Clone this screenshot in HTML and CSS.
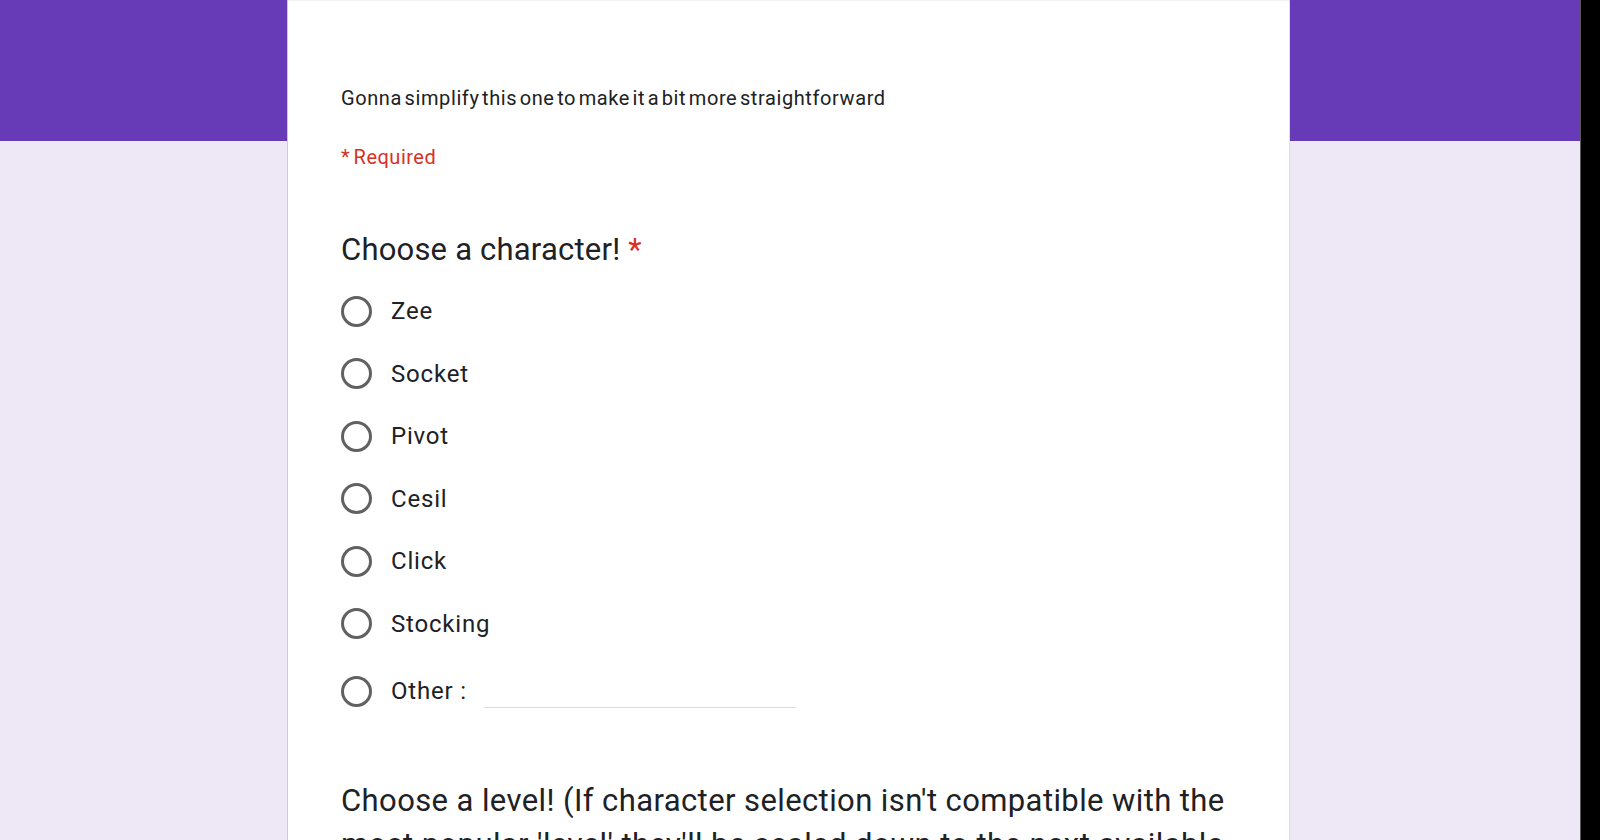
FILE: index.html
```html
<!DOCTYPE html>
<html lang="en">
<head>
<meta charset="utf-8">
<title>Form</title>
<link rel="stylesheet" href="styles.css">
</head>
<body>
<div class="viewport">
  <main class="page">
    <section class="card">
      <p class="desc">Gonna simplify this one to make it a bit more straightforward</p>
      <p class="required">* Required</p>

      <div class="question">
        <h2 class="q-title">Choose a character! <span class="star">*</span></h2>
        <div class="options">
          <label class="option"><span class="radio"></span><span class="opt-text">Zee</span></label>
          <label class="option"><span class="radio"></span><span class="opt-text">Socket</span></label>
          <label class="option"><span class="radio"></span><span class="opt-text">Pivot</span></label>
          <label class="option"><span class="radio"></span><span class="opt-text">Cesil</span></label>
          <label class="option"><span class="radio"></span><span class="opt-text">Click</span></label>
          <label class="option"><span class="radio"></span><span class="opt-text">Stocking</span></label>
          <label class="option option-other"><span class="radio"></span><span class="opt-text">Other :</span><span class="other-input"></span></label>
        </div>
      </div>

      <div class="question question-2">
        <h2 class="q-title q-long">Choose a level! (If character selection isn't compatible with the most popular 'level' they'll be scaled down to the next available one)</h2>
      </div>
    </section>
  </main>
  <div class="edge"></div>
</div>
</body>
</html>
```

FILE: styles.css
```css
html, body {
  margin: 0;
  padding: 0;
  height: 100%;
  overflow: hidden;
}

body {
  font-family: Roboto, "Liberation Sans", Arial, sans-serif;
  color: #202124;
  background: #000;
}

.viewport {
  display: flex;
  height: 840px;
}

.page {
  flex: 0 0 1580px;
  height: 840px;
  background: linear-gradient(to bottom, #673ab7 0, #673ab7 141px, #ede7f6 141px, #ede7f6 100%);
  overflow: hidden;
}

.edge {
  flex: 1;
  background: #000;
  border-left: 1px solid #5a5a5a;
}

.card {
  margin-left: 288px;
  width: 1001px;
  height: 900px;
  box-sizing: border-box;
  background: #fff;
  border-top: 1px solid #f1f1f1;
  box-shadow: -1px 0 0 #cfcbd6, 1px 0 0 #e0dbe8;
  padding: 85px 53px 0 53px;
}

.desc {
  margin: 0;
  font-size: 20px;
  line-height: 24px;
  letter-spacing: 0.6px;
  word-spacing: -3px;
  color: #202124;
}

.required {
  margin: 35px 0 0 0;
  font-size: 20px;
  line-height: 24px;
  color: #d93025;
  letter-spacing: 0.5px;
  word-spacing: -2px;
}

.question {
  margin-top: 63px;
}

.q-title {
  margin: 0;
  font-weight: 400;
  font-size: 31px;
  line-height: 36px;
  letter-spacing: 0.2px;
  color: #202124;
}

.star {
  color: #d93025;
}

.options {
  margin-top: 12px;
  display: flex;
  flex-direction: column;
}

.option {
  display: flex;
  align-items: center;
  height: 62.5px;
}

.option-other {
  height: 72px;
}

.radio {
  flex: 0 0 auto;
  width: 31px;
  height: 31px;
  box-sizing: border-box;
  border: 3px solid #616161;
  border-radius: 50%;
  margin-right: 19px;
}

.opt-text {
  font-size: 24px;
  line-height: 30px;
  letter-spacing: 0.8px;
  color: #202124;
}

.other-input {
  width: 312px;
  height: 33px;
  margin-left: 17px;
  border-bottom: 1px solid #dcdcdc;
  box-sizing: border-box;
  align-self: center;
}

.question-2 {
  margin-top: 52px;
}

.q-long {
  line-height: 44px;
  letter-spacing: 0.4px;
}
```
